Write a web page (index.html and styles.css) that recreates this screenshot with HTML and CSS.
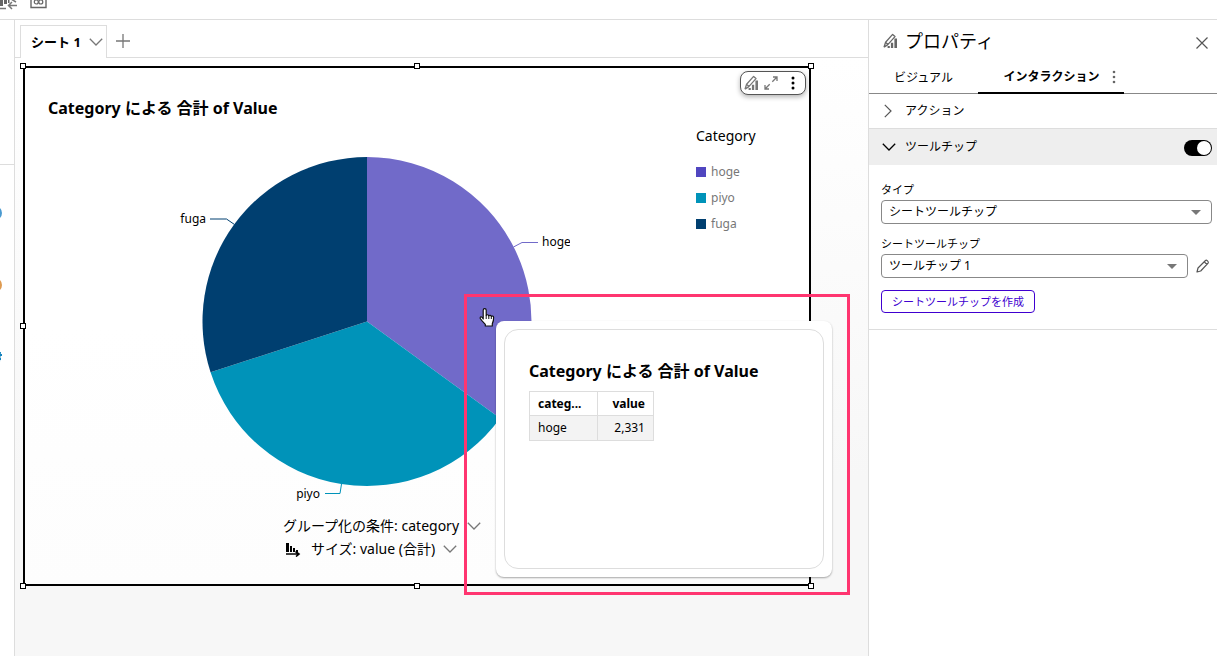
FILE: index.html
```html
<!DOCTYPE html>
<html lang="ja">
<head>
<meta charset="utf-8">
<meta name="viewport" content="width=device-width, initial-scale=1">
<title>シート 1</title>
<link rel="stylesheet" href="styles.css">
</head>
<body>
<svg class="defs" aria-hidden="true">
  <symbol id="i-format" viewBox="0 0 16 16">
    <path d="M1 14.3 2.6 9.2 9.6 1.4 12 3.6 4.8 11.6 1 14.3M2.8 9.4l2.2 2" fill="none" stroke="currentColor" stroke-width="1.3" stroke-linejoin="round"/>
    <path d="M4.6 13h2.2v2H4.6zM7.9 9.8h2.3V15H7.9zM11.4 5.6h2.6V15h-2.6z" fill="currentColor"/>
  </symbol>
  <symbol id="i-chevron" viewBox="0 0 14 8">
    <path d="M.8.8 7 7 13.2.8" fill="none" stroke="currentColor" stroke-width="1.3"/>
  </symbol>
  <symbol id="i-sort" viewBox="0 0 16 16">
    <path d="M1 2h3v9H1zM5 5h2v6H5zM8 7h2v4H8zM11 9h2v2h-2z" fill="currentColor"/>
    <path d="M1 13h12M10.5 10.5 14 13l-3 2.5" fill="none" stroke="currentColor" stroke-width="1.6"/>
  </symbol>
</svg>

<header class="toolbar">
  <button class="tool" aria-label="ビジュアルを追加">
    <svg width="18" height="20" viewBox="0 0 18 20"><path d="M0 2h3v14H0zM4 4h3v10H4zM8 2h1.500v11H8z" fill="#666"/><path d="M0 18.500h6M17 15.500H9M12 12l-3.500 3.500L12 19M11 9l5 3" fill="none" stroke="#777" stroke-width="1.500"/></svg>
  </button>
  <button class="tool" aria-label="リンク">
    <svg width="18" height="20" viewBox="0 0 18 20"><path d="M1 2v15.500h15V2" fill="none" stroke="#666" stroke-width="1.400"/><circle cx="6.300" cy="12" r="2" fill="none" stroke="#666" stroke-width="1.200"/><circle cx="10.800" cy="12" r="2" fill="none" stroke="#666" stroke-width="1.200"/></svg>
  </button>
</header>

<div class="layout">
  <aside class="rail">
    <div class="rail-head"></div>
    <ul class="fields">
      <li class="field field-dim"></li>
      <li class="field field-measure"></li>
      <li class="field field-num"><svg width="14" height="14" viewBox="0 0 14 14"><path d="M4 5h10M3 9h10M7 2 6 12M12 2l-1 10" fill="none" stroke="#1583bd" stroke-width="2"/></svg></li>
    </ul>
  </aside>

  <main class="workspace">
    <nav class="sheets">
      <button class="sheet-tab"><span>シート 1</span><svg class="chev" width="14" height="8"><use href="#i-chevron"/></svg></button>
      <button class="add" aria-label="シートを追加"><svg width="14" height="14" viewBox="0 0 14 14"><path d="M7 0v14M0 7h14" stroke="#777" stroke-width="1.300"/></svg></button>
    </nav>

    <div class="canvas">
      <section class="visual">
        <i class="handle tl"></i><i class="handle tc"></i><i class="handle tr"></i>
        <i class="handle ml"></i><i class="handle bl"></i><i class="handle bc"></i><i class="handle br"></i>

        <div class="visual-menu">
          <button aria-label="書式"><svg width="16" height="16"><use href="#i-format"/></svg></button>
          <button aria-label="最大化"><svg width="14" height="14" viewBox="0 0 14 14"><path d="M8.300 5.700 13 1M9 1h4v4M5.700 8.300 1 13M1 9v4h4" fill="none" stroke="currentColor" stroke-width="1.300"/></svg></button>
          <button class="dark" aria-label="メニュー"><svg width="4" height="14" viewBox="0 0 4 14"><circle cx="2" cy="2" r="1.500"/><circle cx="2" cy="7" r="1.500"/><circle cx="2" cy="12" r="1.500"/></svg></button>
        </div>

        <h2 class="visual-title">Category による 合計 of Value</h2>
        <div class="visual-body">
          <div class="plot">
            <svg class="pie" width="406" height="356" viewBox="164 147 406 356" role="img" aria-label="Category による 合計 of Value">
              <path d="M367 321.500V157A164.500 164.500 0 0 1 500.080 418.190Z" fill="#716ac9"/>
              <path d="M367 321.500 500.080 418.190A164.500 164.500 0 0 1 210.550 372.330Z" fill="#0093b9"/>
              <path d="M367 321.500 210.550 372.330A164.500 164.500 0 0 1 367 157Z" fill="#003f70"/>
              <path d="M513.500 247l8.500-4.500h16" class="lead" stroke="#716ac9"/>
              <path d="M234.500 224.500l-8-5.500H210" class="lead" stroke="#003f70"/>
              <path d="M341.500 484l-1.500 9.500h-15" class="lead" stroke="#0093b9"/>
              <text x="542" y="246">hoge</text>
              <text x="206" y="223" text-anchor="end">fuga</text>
              <text x="320" y="498" text-anchor="end">piyo</text>
            </svg>
            <div class="wells">
              <button class="well"><span>グループ化の条件: category</span><svg class="chev" width="14" height="8"><use href="#i-chevron"/></svg></button>
              <button class="well"><svg class="sort" width="16" height="16"><use href="#i-sort"/></svg><span>サイズ: value (合計)</span><svg class="chev" width="14" height="8"><use href="#i-chevron"/></svg></button>
            </div>
          </div>
          <div class="legend">
            <h3>Category</h3>
            <ul>
              <li class="hoge">hoge</li>
              <li class="piyo">piyo</li>
              <li class="fuga">fuga</li>
            </ul>
          </div>
        </div>

        <div class="tooltip" role="tooltip">
          <div class="tooltip-card">
            <h2>Category による 合計 of Value</h2>
            <table>
              <thead><tr><th>categ...</th><th class="num">value</th></tr></thead>
              <tbody><tr><td>hoge</td><td class="num">2,331</td></tr></tbody>
            </table>
          </div>
        </div>
        <div class="highlight"></div>
        <svg class="cursor" width="18" height="22" viewBox="0 0 18 22"><path d="M5.200 12V3.200a1.500 1.500 0 0 1 3 0V8.500a1.400 1.400 0 0 1 2.600.300 1.400 1.400 0 0 1 2.500.700 1.300 1.300 0 0 1 2.300.900c.200 2.800-.400 4.400-1.300 6.300V19H7.300v-1.700L3.600 13.300c-1-1.200-2-2.200-1.400-3 .8-.9 2-.2 3 1.700Z" fill="#fff" stroke="#111" stroke-width="1.200" stroke-linejoin="round"/><path d="M8.200 8.500V12M10.800 9v3M13.300 9.800V12" stroke="#111" stroke-width="1" fill="none"/></svg>
      </section>
    </div>
  </main>

  <aside class="panel">
    <div class="panel-head">
      <svg class="panel-icon" width="16" height="16"><use href="#i-format"/></svg>
      <h1>プロパティ</h1>
      <button class="close" aria-label="閉じる"><svg width="12" height="12" viewBox="0 0 12 12"><path d="M.5.5l11 11M11.500.5l-11 11" stroke="#555" stroke-width="1.200"/></svg></button>
    </div>
    <div class="tabs">
      <button class="tab">ビジュアル</button>
      <button class="tab active"><span>インタラクション</span><svg width="4" height="14" viewBox="0 0 4 14" fill="#666"><circle cx="2" cy="2" r="1.300"/><circle cx="2" cy="7" r="1.300"/><circle cx="2" cy="12" r="1.300"/></svg></button>
    </div>
    <button class="section closed"><svg width="8" height="14" viewBox="0 0 8 14"><path d="M.8.8 7 7 .8 13.200" fill="none" stroke="#555" stroke-width="1.200"/></svg><span>アクション</span></button>
    <div class="section open">
      <svg width="14" height="8"><use href="#i-chevron"/></svg>
      <label for="tip-on">ツールチップ</label>
      <input class="switch" id="tip-on" type="checkbox" role="switch" checked>
    </div>
    <div class="form">
      <label for="type">タイプ</label>
      <div class="row"><div class="select"><select id="type"><option>シートツールチップ</option></select></div></div>
      <label for="sheet">シートツールチップ</label>
      <div class="row">
        <div class="select"><select id="sheet"><option>ツールチップ 1</option></select></div>
        <button class="edit" aria-label="編集"><svg width="14" height="14" viewBox="0 0 14 14"><path d="M1 13l1-4 7.500-7.500c1-.9 3.400 1 2.600 2.600L4.700 12 1 13ZM8.300 2.800l2.700 2.700" fill="none" stroke="#555" stroke-width="1.200" stroke-linejoin="round"/></svg></button>
      </div>
      <button class="create">シートツールチップを作成</button>
    </div>
  </aside>
</div>
</body>
</html>
```

FILE: styles.css
```css
* { box-sizing: border-box; }

body {
  margin: 0;
  height: 100vh;
  display: flex;
  flex-direction: column;
  overflow: hidden;
  background: #fff;
  color: #000;
  font: 13px/20px "Noto Sans", "Noto Sans CJK JP", sans-serif;
}

button {
  margin: 0;
  padding: 0;
  border: 0;
  background: none;
  color: inherit;
  font: inherit;
}

svg { display: block; flex: none; }
h1, h2, h3, ul { margin: 0; padding: 0; list-style: none; }
.defs { position: absolute; width: 0; height: 0; }
.chev { color: #777; }

.toolbar {
  flex: none;
  height: 20px;
  display: flex;
  align-items: flex-end;
  gap: 12px;
  padding-bottom: 9px;
  border-bottom: 1px solid #ddd;
}

.layout { flex: 1; min-height: 0; display: flex; }

.rail { flex: none; width: 15px; border-right: 1px solid #ddd; overflow: hidden; }
.rail-head { height: 145px; border-bottom: 1px solid #ddd; }
.fields { display: grid; gap: 58px; padding-top: 41px; }
.field { width: 14px; height: 14px; margin-left: -12px; }
.field-dim { border: 2px solid #4a9ad0; border-radius: 7px; }
.field-measure { border: 2px solid #de9a50; border-radius: 7px; }

.workspace { flex: 1; min-width: 0; display: flex; flex-direction: column; }
.sheets {
  flex: none;
  height: 38px;
  display: flex;
  padding: 5px 0 0 5px;
  border-bottom: 1px solid #ddd;
}
.sheet-tab {
  display: flex;
  align-items: center;
  gap: 8px;
  height: 33px;
  padding: 0 3px 0 10px;
  border: 1px solid #ddd;
  border-bottom: 0;
  background: #fff;
  font-weight: 700;
}
.add { width: 32px; display: grid; place-items: center; }

.canvas {
  flex: 1;
  min-height: 0;
  display: flex;
  padding: 8px 57px 70px 8px;
  background: linear-gradient(#fff, #f7f7f7 70%);
}
.visual {
  position: relative;
  flex: 1;
  min-width: 0;
  border: 2px solid #000;
  background: linear-gradient(#fff 50%, #fdfdfd);
}

.handle {
  position: absolute;
  width: 6px;
  height: 6px;
  border: 1px solid #000;
  background: #fff;
}
.tl, .tc, .tr { top: -5px; }
.bl, .bc, .br { bottom: -5px; }
.ml { top: calc(50% - 3px); }
.tl, .ml, .bl { left: -5px; }
.tc, .bc { left: calc(50% - 3px); }
.tr, .br { right: -5px; }

.visual-menu {
  position: absolute;
  top: 3px;
  right: 3px;
  width: 66px;
  height: 24px;
  display: flex;
  align-items: center;
  gap: 4px;
  padding: 0 10px 0 3px;
  border: 1px solid #555;
  border-radius: 8px;
  background: #fff;
  color: #777;
  box-shadow: 0 2px 5px rgb(0 0 0 / 30%);
}
.visual-menu .dark { margin-left: auto; color: #000; }

.visual-title { padding: 28px 0 0 23px; font-size: 16px; line-height: 24px; }
.visual-body { display: flex; padding-left: 23px; }
.plot {
  flex: 1;
  min-width: 0;
  display: flex;
  flex-direction: column;
  align-items: center;
  padding-top: 27px;
}
.pie { margin-right: 10px; }
.pie text { font-size: 12px; }
.lead { fill: none; stroke-width: 1; }
.wells { display: grid; gap: 3px; padding: 13px 0 0 20px; }
.well { display: flex; align-items: center; gap: 8px; font-size: 14px; }
.sort { margin: 0 2px; }
.legend { flex: none; width: 113px; padding-top: 6px; }
.legend h3 { font-size: 14px; line-height: 20px; font-weight: 400; }
.legend ul { display: grid; gap: 6px; padding-top: 16px; }
.legend li { display: flex; align-items: center; gap: 5px; font-size: 12px; color: #777; }
.legend li::before { content: ""; width: 10px; height: 10px; background: currentColor; }
.legend .hoge::before { color: #5046c0; }
.legend .piyo::before { color: #0093b9; }
.legend .fuga::before { color: #003f70; }

.tooltip {
  position: absolute;
  top: 253px;
  left: 471px;
  width: 336px;
  padding: 8px;
  border-radius: 8px;
  background: #fff;
  box-shadow: 0 1px 2px rgb(0 0 0 / 35%);
}
.tooltip-card {
  height: 240px;
  padding: 29px 24px;
  border: 1px solid #ddd;
  border-radius: 14px;
}
.tooltip-card h2 { font-size: 16px; line-height: 24px; }
.tooltip table { margin-top: 8px; border-collapse: collapse; font-size: 12px; line-height: 16px; }
.tooltip th, .tooltip td { width: 56px; height: 24px; padding: 3px 8px; border: 1px solid #ddd; text-align: left; }
.tooltip th:first-child { width: 68px; }
.tooltip td { height: 25px; background: #f3f3f3; }
.tooltip .num { text-align: right; }

.highlight {
  position: absolute;
  top: 226px;
  left: 439px;
  width: 386px;
  height: 301px;
  border: 3px solid #ff3570;
}
.cursor { position: absolute; top: 239px; left: 453px; }

.panel { flex: none; width: 349px; border-left: 1px solid #ddd; font-size: 12px; }
.panel-icon { color: #666; }
.panel-head { display: flex; align-items: center; height: 42px; padding: 0 9px 0 14px; }
.panel-head h1 { flex: 1; padding-left: 6px; font-size: 18px; line-height: 24px; font-weight: 400; }
.close { padding-top: 3px; }
.tabs { display: flex; height: 32px; border-bottom: 1px solid #888; }
.tab { width: 109px; height: 32px; }
.tab.active {
  display: flex;
  align-items: center;
  justify-content: center;
  gap: 12px;
  width: 146px;
  padding-left: 17px;
  border-bottom: 2px solid #000;
  font-weight: 700;
}
.section { display: flex; align-items: center; width: 100%; }
.section.closed { height: 34px; gap: 13px; padding-left: 15px; }
.section.open { height: 37px; gap: 9px; padding: 0 5px 0 13px; border-top: 1px solid #ddd; background: #eee; }
.section span, .section label { flex: 1; padding-bottom: 1px; text-align: left; }
.switch {
  appearance: none;
  width: 28px;
  height: 16px;
  margin: 1px 0 0;
  padding: 1px;
  border-radius: 8px;
  background: #000;
}
.switch::before { content: ""; display: block; width: 14px; height: 14px; border-radius: 50%; background: #fff; }
.switch:checked::before { margin-left: auto; }

.form { padding: 16px 5px 16px 12px; border-bottom: 1px solid #ddd; }
.form label { display: block; font-size: 11px; line-height: 18px; }
.row { display: flex; align-items: center; padding: 1px 0 11px; }
.row:has(.edit) { padding-bottom: 12px; }
.select { position: relative; flex: 1; }
.select::after {
  content: "";
  position: absolute;
  top: 10px;
  right: 11px;
  border: 5px solid transparent;
  border-top-color: #777;
  border-bottom: 0;
}
select {
  appearance: none;
  display: block;
  width: 100%;
  height: 24px;
  padding: 0 7px 1px;
  border: 1px solid #888;
  border-radius: 4px;
  background: #fff;
  color: #000;
  font: inherit;
}
.edit { width: 24px; display: grid; place-items: center end; padding-right: 2px; }
.create {
  height: 23px;
  padding: 0 10px;
  border: 1px solid #4000d0;
  border-radius: 4px;
  color: #4000d0;
  font-size: 11px;
  line-height: 20px;
}
```
